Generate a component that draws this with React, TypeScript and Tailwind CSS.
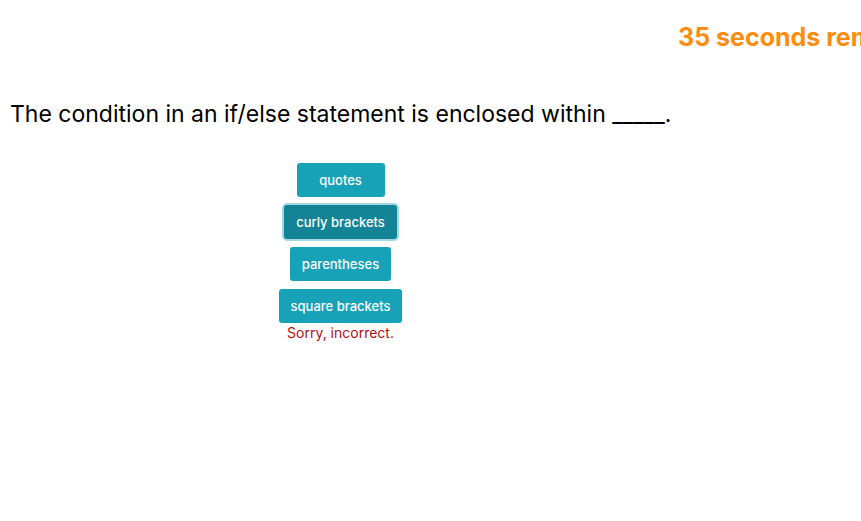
import React from "react";

const answers = ["quotes", "curly brackets", "parentheses", "square brackets"];
const selected = "curly brackets";

export default function App() {
  return (
    <main className="min-h-screen w-full overflow-hidden bg-white font-['Inter',sans-serif] text-[#111318]">
      <header className="flex justify-end overflow-hidden pt-5">
        <p className="w-[183px] whitespace-nowrap text-[25px] leading-[34px] font-bold text-[#ff8c0e]">
          35 seconds remaining
        </p>
      </header>
      <h1 className="mt-[42px] pl-[10px] text-[23px] leading-9 font-normal whitespace-nowrap text-black">
        The condition in an if/else statement is enclosed within _____.
      </h1>
      <section className="mt-[31px] flex w-[681px] max-w-full flex-col items-center">
        <div className="flex flex-col items-center gap-2">
          {answers.map((answer) => (
            <button
              key={answer}
              type="button"
              className={`h-[34px] min-w-[88px] rounded-[3px] px-3 text-[13px] leading-5 font-medium text-white ${
                answer === selected ? "bg-[#138496] ring-2 ring-[#a2dae3]" : "bg-[#17a2b8]"
              }`}
            >
              {answer}
            </button>
          ))}
        </div>
        <p className="text-[14px] leading-5 text-[#b01010]">Sorry, incorrect.</p>
      </section>
    </main>
  );
}
